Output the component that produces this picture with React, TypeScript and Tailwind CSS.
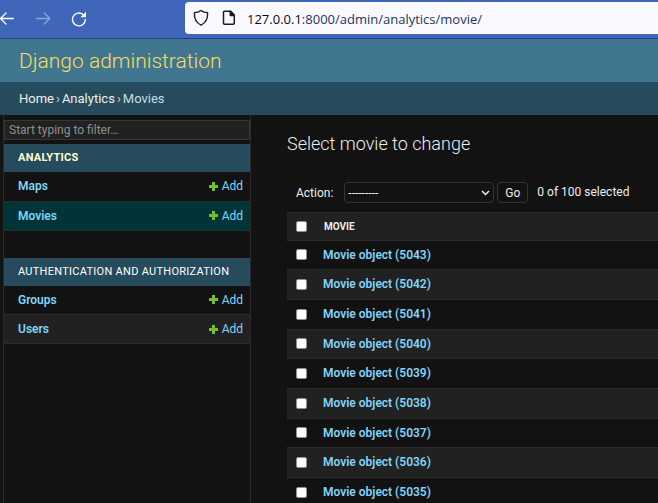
const movies = [5043, 5042, 5041, 5040, 5039, 5038, 5037, 5036, 5035];

const checkbox =
  "block size-[11px] appearance-none rounded-xs border border-[#8f8f9d] bg-white checked:bg-[#0060df]";

function BrowserBar() {
  return (
    <div className="flex h-[39px] items-start border-b border-[#1d3d86] bg-[#3f66b8] text-white">
      <nav className="flex h-[38px] w-[185px] shrink-0 items-center">
        <button aria-label="Back" className="w-[14px] shrink-0">
          <svg width="14" height="14" viewBox="0 0 14 14" fill="none" stroke="currentColor" strokeWidth="1.3" strokeLinecap="round" strokeLinejoin="round">
            <path d="M13.3 6.500H.7M6 1 .5 6.500 6 12" />
          </svg>
        </button>
        <button aria-label="Forward" className="ml-[22px] w-[15px] shrink-0 text-[#8ba2d5]">
          <svg width="15" height="14" viewBox="0 0 15 14" fill="none" stroke="currentColor" strokeWidth="1.3" strokeLinecap="round" strokeLinejoin="round">
            <path d="M.7 6.500h13.100M8.300 1l5.500 5.500L8.300 12" />
          </svg>
        </button>
        <button aria-label="Reload" className="ml-[20px] w-4 shrink-0">
          <svg width="16" height="16" viewBox="0 0 16 16" fill="none">
            <path d="M14.300 8.400A6.400 6.400 0 1 1 12 3.500" stroke="currentColor" strokeWidth="1.4" strokeLinecap="round" />
            <path d="M15 .8v5a.5.5 0 0 1-.5.5H9.500Z" fill="currentColor" />
          </svg>
        </button>
      </nav>
      <div className="mt-[2px] flex h-8 min-w-0 flex-1 items-center rounded-l bg-[#f9f9fe]">
        <svg className="ml-2 shrink-0" width="16" height="18" viewBox="0 0 16 18" fill="none" stroke="#1b1b22" strokeWidth="1.4" strokeLinejoin="round">
          <path d="M8 1.500c1.900 1.500 4 2.100 6.600 2.100.3 5.600-1.500 10-6.600 12.600C2.900 13.600 1.100 9.200 1.400 3.600 4 3.600 6.100 3 8 1.500Z" />
        </svg>
        <svg className="ml-[13px] shrink-0" width="14" height="16" viewBox="0 0 14 16" fill="none" stroke="#1b1b22" strokeWidth="1.5" strokeLinejoin="round">
          <path d="M2.500 1.300h6.200l3.600 3.800v8.100c0 .6-.4 1-1 1H2.500c-.6 0-1-.4-1-1V2.300c0-.6.4-1 1-1Z" />
          <path d="M8.300 1.300v4.200h4Z" fill="#1b1b22" />
        </svg>
        <div className="ml-[11px] pt-px font-['Open_Sans',sans-serif] text-[13px] leading-5 whitespace-nowrap text-[#27355c]">
          <span className="text-[#0c0c14]">127.0.0.1</span>:8000/admin/analytics/movie/
        </div>
      </div>
    </div>
  );
}

function ModelRow({ name, state }: { name: string; state: string }) {
  return (
    <tr className={`border-b border-[#2b2b2b] ${state}`}>
      <th scope="row" className="h-[29px] pl-[14px] text-left font-semibold">
        <a href="#" className="text-[#81d4fa]">{name}</a>
      </th>
      <td className="pr-[7px]">
        <a href="#" className="flex items-center justify-end gap-1 text-[#81d4fa]">
          <svg width="9" height="9" viewBox="0 0 9 9" fill="#70bf2b">
            <path d="M3 0h3v3h3v3H6v3H3V6H0V3h3Z" />
          </svg>
          Add
        </a>
      </td>
    </tr>
  );
}

function Sidebar() {
  return (
    <aside className="w-[248px] shrink-0 border-x border-[#2b2b2b] pt-[5px]">
      <input
        type="search"
        aria-label="Filter navigation items"
        placeholder="Start typing to filter…"
        className="block h-5 w-full border border-[#353535] bg-[#212121] px-1 text-xs outline-none placeholder:text-[#8f8f8f]"
      />
      <table className="mt-1 w-full border-collapse">
        <caption className="h-7 bg-[#264b5d] pl-[14px] text-left text-[11px] leading-7 font-bold tracking-wide text-[#ffffcc] uppercase">
          <a href="#">Analytics</a>
        </caption>
        <tbody>
          <ModelRow name="Maps" state="" />
          <ModelRow name="Movies" state="bg-[#003438]" />
        </tbody>
      </table>
      <table className="mt-[27px] w-full border-collapse">
        <caption className="h-7 bg-[#264b5d] pl-[14px] text-left text-[11px] leading-7 tracking-wide text-white uppercase">
          <a href="#">Authentication and Authorization</a>
        </caption>
        <tbody>
          <ModelRow name="Groups" state="" />
          <ModelRow name="Users" state="bg-[#212121]" />
        </tbody>
      </table>
    </aside>
  );
}

function MovieList() {
  return (
    <main className="min-w-0 flex-1 pt-[17px] pl-9">
      <h1 className="text-[18px] leading-6 font-light text-[#eeeeee]">Select movie to change</h1>
      <div className="mt-[26px] flex h-[21px] items-center pl-[9px] whitespace-nowrap">
        <label htmlFor="action">Action:</label>
        <div className="relative ml-[11px]">
          <select id="action" className="block h-[21px] w-[150px] appearance-none rounded border border-[#353535] bg-[#121212] px-[3px] text-xs">
            <option>---------</option>
            <option>Delete selected movies</option>
          </select>
          <svg className="pointer-events-none absolute top-2 right-1" width="9" height="6" viewBox="0 0 9 6" fill="none" stroke="#eeeeee" strokeWidth="1.5">
            <path d="m1 1 3.500 3.500L8 1" />
          </svg>
        </div>
        <button className="ml-[3px] h-[21px] w-[31px] rounded border border-[#353535]">Go</button>
        <span className="ml-[9px] pb-px">0 of 100 selected</span>
      </div>
      <table className="mt-[9px] w-full border-collapse">
        <thead>
          <tr className="h-7 border-t border-[#2b2b2b] bg-[#212121]">
            <th className="w-9 pb-px pl-[9px]">
              <input type="checkbox" aria-label="Select all movies" className={checkbox} />
            </th>
            <th className="pl-px text-left text-[10px] font-bold uppercase">Movie</th>
          </tr>
        </thead>
        <tbody>
          {movies.map((id) => (
            <tr key={id} className="h-[30px] border-t border-[#2b2b2b] even:bg-[#212121] nth-[3n+1]:h-[29px]">
              <td className="w-9 pb-px pl-[9px]">
                <input type="checkbox" aria-label={`Select movie ${id}`} className={checkbox} />
              </td>
              <th scope="row" className="pb-px text-left font-semibold">
                <a href="#" className="text-[#81d4fa]">Movie object ({id})</a>
              </th>
            </tr>
          ))}
        </tbody>
      </table>
    </main>
  );
}

export default function App() {
  return (
    <div className="flex h-screen flex-col overflow-hidden bg-[#121212] font-[Roboto,sans-serif] text-xs leading-4 text-[#eeeeee]">
      <BrowserBar />
      <header className="flex h-[43px] shrink-0 items-center bg-[#417690] pl-[19px] text-[21px] font-light text-[#f5dd5d]">
        <a href="#">Django administration</a>
      </header>
      <nav aria-label="Breadcrumbs" className="flex h-[33px] shrink-0 items-center gap-[2px] bg-[#264b5d] pl-[19px] text-[13px] text-[#c4dce8]">
        <a href="#" className="text-[#eeeeee]">Home</a>
        <span>›</span>
        <a href="#" className="text-[#eeeeee]">Analytics</a>
        <span>›</span>
        <span>Movies</span>
      </nav>
      <div className="flex min-h-0 flex-1 pl-[3px]">
        <Sidebar />
        <MovieList />
      </div>
    </div>
  );
}
